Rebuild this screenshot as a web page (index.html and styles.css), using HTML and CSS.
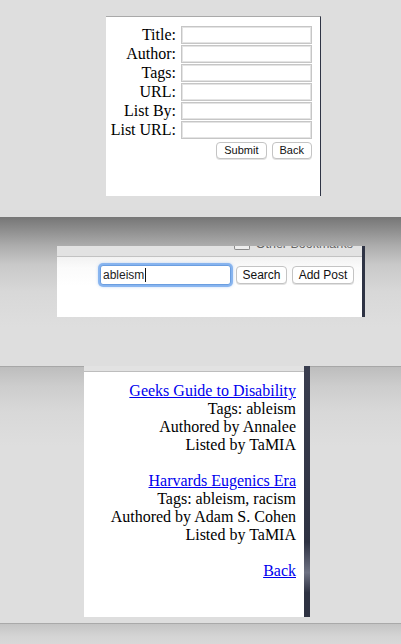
FILE: index.html
```html
<!DOCTYPE html>
<html>
<head>
<meta charset="utf-8">
<link rel="stylesheet" href="styles.css">
</head>
<body>
<section class="shot shot-form">
  <div class="panel form-panel">
    <form class="post-form">
      <label class="lbl">Title:</label><input class="field" type="text">
      <label class="lbl">Author:</label><input class="field" type="text">
      <label class="lbl">Tags:</label><input class="field" type="text">
      <label class="lbl">URL:</label><input class="field" type="text">
      <label class="lbl">List By:</label><input class="field" type="text">
      <label class="lbl">List URL:</label><input class="field" type="text">
      <div class="form-buttons">
        <button type="button" class="btn">Submit</button>
        <button type="button" class="btn">Back</button>
      </div>
    </form>
  </div>
</section>

<section class="shot shot-search">
  <div class="panel search-panel">
    <div class="toolbar">
      <span class="folder"></span>
      <span class="bm-text">Other Bookmarks</span>
    </div>
    <div class="search-row">
      <div class="search-box"><span class="search-text">ableism</span><span class="caret"></span></div>
      <button type="button" class="btn btn-lg btn-search">Search</button>
      <button type="button" class="btn btn-lg btn-add">Add Post</button>
    </div>
  </div>
</section>

<section class="shot shot-results">
  <div class="results-row">
    <div class="panel results-panel">
      <div class="strip"></div>
      <div class="results">
        <div class="entry">
          <a href="#" class="link">Geeks Guide to Disability</a>
          <div>Tags: ableism</div>
          <div>Authored by Annalee</div>
          <div>Listed by TaMIA</div>
        </div>
        <div class="entry">
          <a href="#" class="link">Harvards Eugenics Era</a>
          <div>Tags: ableism, racism</div>
          <div>Authored by Adam S. Cohen</div>
          <div>Listed by TaMIA</div>
        </div>
        <div class="entry">
          <a href="#" class="link">Back</a>
        </div>
      </div>
    </div>
  </div>
  <div class="bottom-strip"></div>
</section>
</body>
</html>
```

FILE: styles.css
```css
* { box-sizing: border-box; }
html, body { margin: 0; padding: 0; }
body {
  background: #dedede;
  width: 401px;
  height: 644px;
  overflow: hidden;
  font-family: "Liberation Serif", "Times New Roman", serif;
  color: #000;
}

.shot { display: block; }

/* ---------- Section 1: form ---------- */
.shot-form {
  height: 217px;
  padding: 16px 0 0 106px;
}
.form-panel {
  width: 215px;
  height: 180px;
  background: #fff;
  border-top: 1px solid #a9a9a9;
  border-right: 1px solid #2f3445;
  padding-top: 9px;
}
.post-form {
  display: grid;
  grid-template-columns: 70px 131px;
  column-gap: 5px;
  row-gap: 1px;
  margin: 0;
}
.lbl {
  text-align: right;
  font-size: 16px;
  line-height: 18px;
  white-space: nowrap;
  align-self: center;
}
.field {
  width: 131px;
  height: 18px;
  margin: 0;
  border: 1px solid #c6c6c6;
  box-shadow: inset 0 0 0 1px #e4e4e4;
  background: #fff;
  padding: 0;
}
.form-buttons {
  grid-column: 2;
  display: flex;
  justify-content: flex-end;
  gap: 5px;
  margin-top: 2px;
}
.btn {
  font-family: "Liberation Sans", Arial, sans-serif;
  font-size: 11px;
  height: 17px;
  line-height: 15px;
  padding: 0 7px;
  margin: 0;
  background: #fff;
  color: #111;
  border: 1px solid #c4c4c4;
  border-radius: 4px;
  box-shadow: 0 1px 0 #e2e2e2;
  white-space: nowrap;
}

/* ---------- Section 2: search ---------- */
.shot-search {
  height: 149px;
  padding: 29px 0 0 57px;
  background: linear-gradient(#767676 0, #8c8c8c 12px, #ababab 28px, #c9c9c9 48px, #d8d8d8 75px, #dedede 110px);
}
.search-panel {
  width: 308px;
  height: 71px;
  background: linear-gradient(#f2f2f2 11px, #fbfbfb 22px, #fff 40px);
  border-right: 3px solid #2e3344;
}
.toolbar {
  height: 11px;
  background: #e2e2e2;
  border-bottom: 1px solid #c2c2c2;
  display: flex;
  justify-content: flex-end;
  align-items: flex-start;
  gap: 6px;
  padding-right: 9px;
  overflow: hidden;
}
.folder {
  width: 16px;
  height: 4px;
  background: #eee;
  border: 1px solid #8a8a8a;
  border-top: none;
  border-radius: 0 0 2px 2px;
}
.bm-text {
  font-family: "Liberation Sans", Arial, sans-serif;
  font-size: 12.5px;
  line-height: 14px;
  color: #666;
  margin-top: -9px;
  white-space: nowrap;
}
.search-row {
  display: flex;
  justify-content: flex-end;
  align-items: center;
  gap: 5px;
  padding: 8px 8px 0 0;
}
.search-box {
  width: 131px;
  height: 20px;
  border: 1px solid #6b9ee0;
  border-radius: 3px;
  box-shadow: 0 0 0 2px rgba(112, 165, 236, 0.75), 0 0 3px 2px rgba(130, 180, 240, 0.5);
  background: #fff;
  display: flex;
  align-items: center;
  padding-left: 2px;
  font-family: "Liberation Sans", Arial, sans-serif;
  font-size: 12px;
  color: #222;
}
.caret {
  display: inline-block;
  width: 1px;
  height: 14px;
  background: #111;
  margin-left: 1px;
}
.btn-lg {
  font-size: 12px;
  height: 18px;
  line-height: 16px;
  padding: 0;
  text-align: center;
}
.btn-search { width: 51px; }
.btn-add { width: 62px; }

/* ---------- Section 3: results ---------- */
.shot-results {
  height: 278px;
}
.results-row {
  height: 257px;
  padding-left: 84px;
  background: linear-gradient(#a7a7a7 0, #a7a7a7 1px, #bdbdbd 1px, #cdcdcd 20px, #d8d8d8 45px, #dedede 80px);
}
.results-panel {
  width: 226px;
  height: 251px;
  background: #fff;
  border-image: linear-gradient(#3a3e4f, #2e3242 70%, #6d7182 82%, #2e3242 90%, #2e3242) 1;
  border-style: solid;
  border-width: 0 6px 0 0;
}
.strip {
  height: 6px;
  background: #e2e2e2;
  border-bottom: 1px solid #bdbdbd;
}
.results {
  padding: 10px 8px 0 0;
  text-align: right;
  font-size: 16px;
  line-height: 18px;
}
.entry { margin-bottom: 18px; }
.link {
  color: #0000ee;
  text-decoration: underline;
  display: block;
}
.bottom-strip {
  height: 21px;
  border-top: 1px solid #a9a9a9;
  background: linear-gradient(#c4c4c4, #d4d4d4 12px, #d8d8d8);
}
```
